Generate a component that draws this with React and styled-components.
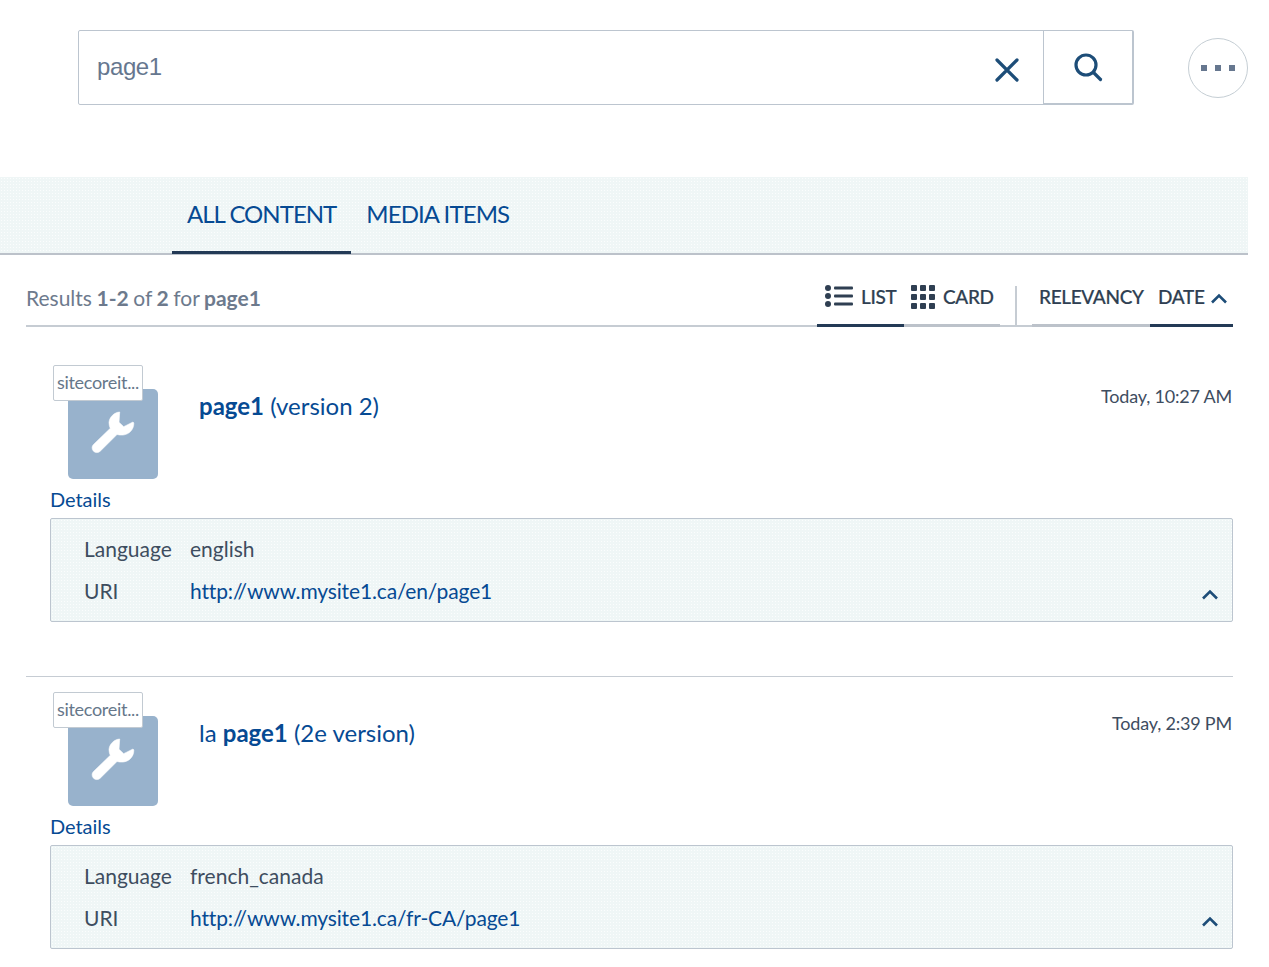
import React from "react";
import styled, { createGlobalStyle, css } from "styled-components";

const Global = createGlobalStyle`
  html, body { margin: 0; padding: 0; background: #fff; }
  body { font-family: Lato, "Open Sans", sans-serif; color: #2f3f52; }
  * { box-sizing: border-box; }
`;

const textured = css`
  background-color: #eff6f6;
  background-image: radial-gradient(circle, #fbfdfd 0.7px, transparent 0.9px);
  background-size: 3px 3px;
`;

const Page = styled.div`
  width: 1248px;
  height: 967px;
  overflow: hidden;
  padding-top: 30px;
`;

const SearchRow = styled.div`
  display: flex;
  align-items: center;
  padding-left: 78px;
  height: 75px;
`;

const SearchField = styled.div`
  width: 966px;
  height: 75px;
  border: 1px solid #bcc5cf;
  border-radius: 2px 0 0 2px;
  display: flex;
  align-items: center;
  justify-content: space-between;
  padding: 0 23px 1px 18px;
  font-family: "Liberation Sans", Arial, sans-serif;
  font-size: 24px;
  letter-spacing: -0.4px;
  color: #66778f;
`;

const IconButton = styled.button`
  border: 0;
  background: none;
  padding: 0;
  margin-top: 6px;
  display: flex;
`;

const SearchButton = styled.button`
  width: 91px;
  height: 75px;
  margin-left: -1px;
  background: #fff;
  border: 1px solid #bcc5cf;
  border-width: 1px 2px 2px 1px;
  border-radius: 0 2px 2px 0;
  display: flex;
  align-items: center;
  justify-content: center;
  padding: 0;
`;

const MoreButton = styled.button`
  width: 60px;
  height: 60px;
  margin-left: 54px;
  border-radius: 50%;
  border: 1px solid #c5ced4;
  background: #fff;
  display: flex;
  align-items: center;
  justify-content: center;
  gap: 8px;
  padding: 0;
`;

const Dot = styled.span`
  width: 6px;
  height: 6px;
  background: #66778f;
`;

const TabBand = styled.div`
  ${textured}
  margin-top: 72px;
  height: 78px;
  border-bottom: 2px solid #bcc2ca;
  display: flex;
  padding-left: 172px;
`;

const Tab = styled.div`
  height: 77px;
  padding: 0 15px 2px;
  display: flex;
  align-items: center;
  font-size: 24px;
  letter-spacing: ${(p) => p.$tight}px;
  white-space: nowrap;
  color: #064a93;
  border-bottom: 3px solid ${(p) => (p.$active ? "#233a56" : "transparent")};
`;

const Toolbar = styled.div`
  margin: 0 15px 0 26px;
  width: 1207px;
  height: 72px;
  border-bottom: 2px solid #c6ccd3;
  display: flex;
  align-items: flex-end;
  justify-content: space-between;
`;

const Summary = styled.div`
  font-size: 21px;
  word-spacing: -0.8px;
  color: #6d7a8d;
  line-height: 26px;
  padding-bottom: 14px;
  b { font-weight: 700; }
`;

const Controls = styled.div`
  display: flex;
  align-items: flex-end;
  height: 42px;
  margin-bottom: -2px;
`;

const Control = styled.div`
  height: 42px;
  width: ${(p) => p.$w}px;
  display: flex;
  align-items: flex-start;
  gap: 8px;
  padding-left: ${(p) => p.$pad}px;
  font-size: 19px;
  font-weight: 500;
  line-height: 24px;
  letter-spacing: -0.35px;
  -webkit-text-stroke: 0.2px #2f3f52;
  white-space: nowrap;
  color: #2f3f52;
  border-bottom: 3px solid ${(p) => (p.$active ? "#233a56" : "#bcc2ca")};
`;

const ControlIcon = styled.svg`
  display: block;
  flex: none;
`;

const ControlChevron = styled.span`
  display: flex;
  margin: 8px 0 0 -3px;
`;

const Separator = styled.div`
  width: 2px;
  height: 41px;
  background: #c6ccd3;
  margin: 0 15px 0 15px;
`;

const Results = styled.div`
  margin: 0 15px 0 26px;
  width: 1207px;
`;

const Result = styled.article`
  padding-top: ${(p) => (p.$first ? "38px" : "15px")};
  border-top: ${(p) => (p.$first ? "0" : "1px solid #c6ccd3")};
  margin-top: ${(p) => (p.$first ? "0" : "54px")};
`;

const Head = styled.div`
  display: flex;
  align-items: flex-start;
  height: 114px;
  padding-left: 42px;
`;

const Tile = styled.div`
  position: relative;
  width: 90px;
  height: 90px;
  margin-top: 24px;
  background: #98b2cc;
  border-radius: 5px;
  flex: none;
`;

const Badge = styled.div`
  position: absolute;
  left: -15px;
  top: -24px;
  width: 90px;
  height: 36px;
  padding-bottom: 2px;
  background: #fff;
  border: 1px solid #c2cad2;
  border-radius: 2px;
  font-size: 18px;
  letter-spacing: -0.3px;
  color: #66778a;
  display: flex;
  align-items: center;
  justify-content: center;
  white-space: nowrap;
  overflow: hidden;
`;

const Title = styled.div`
  margin: 25px 0 0 41px;
  font-size: 24px;
  line-height: 32px;
  color: #064a93;
  flex: 1;
  b { font-weight: 700; }
`;

const When = styled.div`
  margin-top: 18px;
  padding-right: 1px;
  font-size: 18px;
  line-height: 26px;
  letter-spacing: -0.2px;
  color: #3e4d5f;
`;

const DetailsLink = styled.div`
  margin-left: 24px;
  height: 39px;
  font-size: 20px;
  letter-spacing: -0.05px;
  line-height: 26px;
  padding-top: 7px;
  color: #064a93;
`;

const Panel = styled.div`
  ${textured}
  position: relative;
  margin-left: 24px;
  height: 104px;
  border: 1px solid #bcc5cf;
  border-radius: 2px;
  padding: 8px 0 0 33px;
  display: grid;
  grid-template-columns: 106px 1fr;
  grid-auto-rows: 42px;
  align-items: center;
  font-size: 21px;
  color: #3e4d5f;
`;

const Link = styled.span`
  color: #064a93;
  letter-spacing: -0.14px;
`;

const Collapse = styled.span`
  position: absolute;
  right: 13px;
  bottom: 21px;
  display: flex;
`;

const Wrench = () => (
  <svg width="90" height="90" viewBox="0 0 90 90" style={{ display: "block" }}>
    <path
      d="M51.7 23 C46 23.5 41.5 28 41 33.5 C41 35.5 41.5 37.5 42.3 39.3 L25.5 55.5 A4.7 4.7 0 0 0 32.2 62.2 L49 45.5 C51 46 53 46.2 55 46 C61 45.5 66 40.5 65.8 34 L65 33 L55.7 37.7 L51 33.3 Z"
      fill="#fff"
      stroke="#fff"
      strokeWidth="0.6"
      strokeLinejoin="round"
    />
  </svg>
);

const Chevron = () => (
  <svg width="18" height="11" viewBox="0 0 18 11" fill="none" style={{ display: "block" }}>
    <path d="M2 9.5 L9 2.5 L16 9.5" stroke="#1d4d78" strokeWidth="2.6" />
  </svg>
);

const data = [
  { title: <><b>page1</b> (version 2)</>, when: "Today, 10:27 AM", lang: "english", uri: "http://www.mysite1.ca/en/page1" },
  { title: <>la <b>page1</b> (2e version)</>, when: "Today, 2:39 PM", lang: "french_canada", uri: "http://www.mysite1.ca/fr-CA/page1" },
];

export default function App() {
  return (
    <Page>
      <Global />
      <SearchRow>
        <SearchField>
          page1
          <IconButton aria-label="clear">
            <svg width="26" height="26" viewBox="0 0 26 26" fill="none">
              <path d="M3 3 L23 23 M23 3 L3 23" stroke="#1d4d78" strokeWidth="3.2" strokeLinecap="round" />
            </svg>
          </IconButton>
        </SearchField>
        <SearchButton aria-label="search">
          <svg width="30" height="30" viewBox="0 0 30 30" fill="none">
            <circle cx="13" cy="13" r="10" stroke="#1d4d78" strokeWidth="3.2" />
            <path d="M20.5 20.5 L27.5 27.5" stroke="#1d4d78" strokeWidth="3.2" strokeLinecap="round" />
          </svg>
        </SearchButton>
        <MoreButton aria-label="more">
          <Dot /><Dot /><Dot />
        </MoreButton>
      </SearchRow>

      <TabBand>
        <Tab $active $tight={-0.98}>ALL CONTENT</Tab>
        <Tab $tight={-0.9}>MEDIA ITEMS</Tab>
      </TabBand>

      <Toolbar>
        <Summary>Results <b>1-2</b> of <b>2</b> for <b>page1</b></Summary>
        <Controls>
          <Control $w={87} $pad={8} $active>
            <ControlIcon width="28" height="22" viewBox="0 0 28 22" fill="#2f3f52">
              <circle cx="3" cy="3" r="3" /><circle cx="3" cy="11" r="3" /><circle cx="3" cy="19" r="3" />
              <rect x="9" y="1.5" width="19" height="3" rx="1" /><rect x="9" y="9.5" width="19" height="3" rx="1" /><rect x="9" y="17.5" width="19" height="3" rx="1" />
            </ControlIcon>
            LIST
          </Control>
          <Control $w={96} $pad={7}>
            <ControlIcon width="24" height="24" viewBox="0 0 24 24" fill="#2f3f52">
              {[0, 9, 18].flatMap((y) => [0, 9, 18].map((x) => <rect key={`${x}-${y}`} x={x} y={y} width="6" height="6" rx="1" />))}
            </ControlIcon>
            CARD
          </Control>
          <Separator />
          <Control $w={118} $pad={7}>RELEVANCY</Control>
          <Control $w={83} $pad={8} $active>
            DATE
            <ControlChevron><Chevron /></ControlChevron>
          </Control>
        </Controls>
      </Toolbar>

      <Results>
        {data.map((r, i) => (
          <Result key={r.uri} $first={i === 0}>
            <Head>
              <Tile>
                <Badge>sitecoreit...</Badge>
                <Wrench />
              </Tile>
              <Title>{r.title}</Title>
              <When>{r.when}</When>
            </Head>
            <DetailsLink>Details</DetailsLink>
            <Panel>
              <span>Language</span><span>{r.lang}</span>
              <span>URI</span><Link>{r.uri}</Link>
              <Collapse><Chevron /></Collapse>
            </Panel>
          </Result>
        ))}
      </Results>
    </Page>
  );
}
